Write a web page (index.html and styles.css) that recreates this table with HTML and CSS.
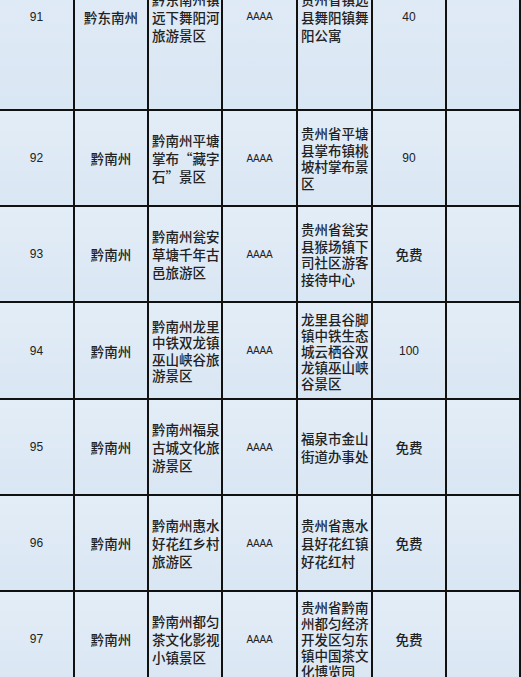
FILE: index.html
```html
<!DOCTYPE html>
<html lang="zh-CN">
<head>
<meta charset="utf-8">
<title>景区列表</title>
<link rel="stylesheet" href="styles.css">
</head>
<body>
<div class="sheet">
  <div class="cell center num r-first">91</div>
  <div class="cell center r-first">黔东南州</div>
  <div class="cell left r-first"><span class="l3">黔东南州镇远下舞阳河旅游景区</span></div>
  <div class="cell center level r-first">AAAA</div>
  <div class="cell left r-first"><span class="l3">贵州省镇远县舞阳镇舞阳公寓</span></div>
  <div class="cell center num r-first">40</div>
  <div class="cell r-first"></div>

  <div class="cell center num">92</div>
  <div class="cell center">黔南州</div>
  <div class="cell left"><span class="l3">黔南州平塘掌布“藏字石”景区</span></div>
  <div class="cell center level">AAAA</div>
  <div class="cell left"><span class="l4">贵州省平塘县掌布镇桃坡村掌布景区</span></div>
  <div class="cell center num">90</div>
  <div class="cell"></div>

  <div class="cell center num">93</div>
  <div class="cell center">黔南州</div>
  <div class="cell left"><span class="l3">黔南州瓮安草塘千年古邑旅游区</span></div>
  <div class="cell center level">AAAA</div>
  <div class="cell left"><span class="l4">贵州省瓮安县猴场镇下司社区游客接待中心</span></div>
  <div class="cell center">免费</div>
  <div class="cell"></div>

  <div class="cell center num">94</div>
  <div class="cell center">黔南州</div>
  <div class="cell left"><span class="l4">黔南州龙里中铁双龙镇巫山峡谷旅游景区</span></div>
  <div class="cell center level">AAAA</div>
  <div class="cell left"><span class="l5">龙里县谷脚镇中铁生态城云栖谷双龙镇巫山峡谷景区</span></div>
  <div class="cell center num">100</div>
  <div class="cell"></div>

  <div class="cell center num">95</div>
  <div class="cell center">黔南州</div>
  <div class="cell left"><span class="l3">黔南州福泉古城文化旅游景区</span></div>
  <div class="cell center level">AAAA</div>
  <div class="cell left"><span class="l3">福泉市金山街道办事处</span></div>
  <div class="cell center">免费</div>
  <div class="cell"></div>

  <div class="cell center num">96</div>
  <div class="cell center">黔南州</div>
  <div class="cell left"><span class="l3">黔南州惠水好花红乡村旅游区</span></div>
  <div class="cell center level">AAAA</div>
  <div class="cell left"><span class="l3">贵州省惠水县好花红镇好花红村</span></div>
  <div class="cell center">免费</div>
  <div class="cell"></div>

  <div class="cell center num">97</div>
  <div class="cell center">黔南州</div>
  <div class="cell left"><span class="l3">黔南州都匀茶文化影视小镇景区</span></div>
  <div class="cell center level">AAAA</div>
  <div class="cell left"><span class="l5">贵州省黔南州都匀经济开发区匀东镇中国茶文化博览园</span></div>
  <div class="cell center">免费</div>
  <div class="cell"></div>
</div>
</body>
</html>
```

FILE: styles.css
```css
html, body {
  margin: 0;
  padding: 0;
  background: #dce8f4;
  overflow: hidden;
}

.sheet {
  display: grid;
  grid-template-columns: 75px 74px 74px 75px 75px 74px 74px;
  grid-template-rows: 187px 96px 96px 97px 96px 96px 96px;
  margin-top: -76px;
  width: 521px;
  font-family: "Noto Sans CJK SC", "Liberation Sans", sans-serif;
  font-size: 13.5px;
  font-weight: 500;
  color: #222222;
}

.cell {
  box-sizing: border-box;
  border-right: 2px solid #111111;
  border-bottom: 2px solid #111111;
  background: linear-gradient(#e3edf7, #d9e6f3);
  display: flex;
  align-items: center;
  overflow: hidden;
}

.center {
  justify-content: center;
  text-align: center;
}

.left {
  justify-content: flex-start;
  padding-left: 3px;
  padding-right: 0;
}

.left span {
  display: block;
  width: 69px;
  word-break: break-all;
}

.num {
  font-family: "Liberation Sans", "Noto Sans CJK SC", sans-serif;
  font-size: 12px;
  font-weight: 400;
}

.level {
  font-family: "Liberation Sans", sans-serif;
  font-size: 10px;
  font-weight: 400;
  letter-spacing: -0.2px;
}

.l3 { line-height: 18px; }
.l4 { line-height: 16.5px; }
.l5 { line-height: 16px; }
```
